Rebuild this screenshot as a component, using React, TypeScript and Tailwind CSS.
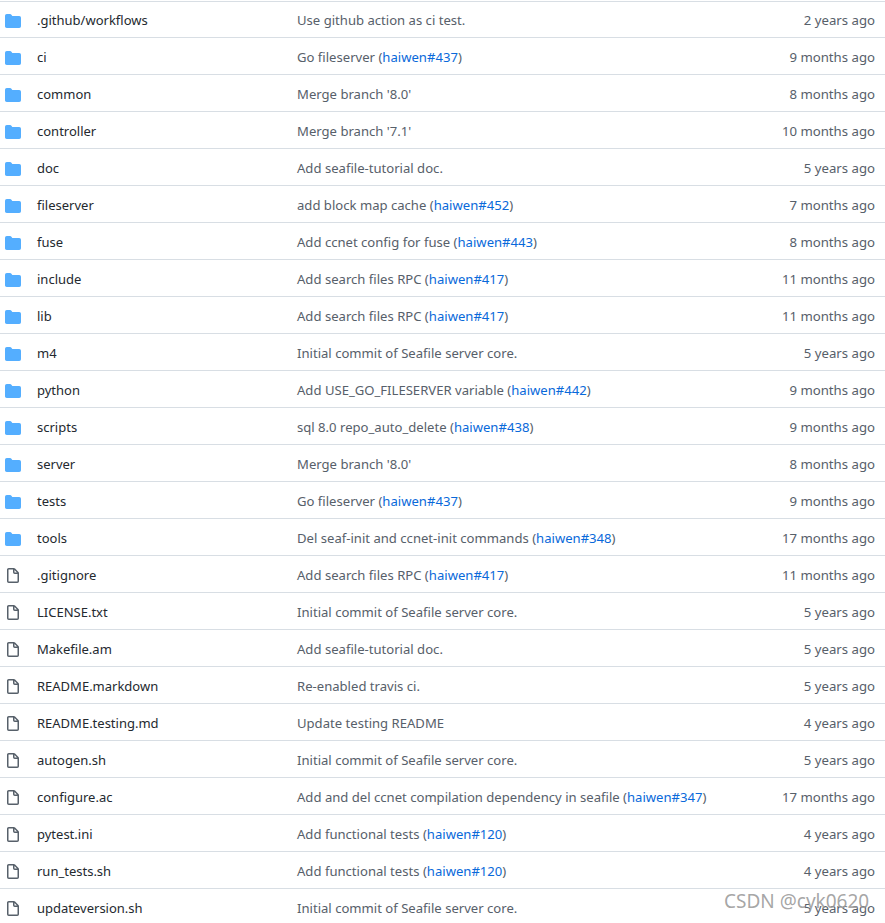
const rows: [string, boolean, string, string | null, string, string][] = [
  [".github/workflows", true, "Use github action as ci test.", null, "", "2 years ago"],
  ["ci", true, "Go fileserver (", "haiwen#437", ")", "9 months ago"],
  ["common", true, "Merge branch '8.0'", null, "", "8 months ago"],
  ["controller", true, "Merge branch '7.1'", null, "", "10 months ago"],
  ["doc", true, "Add seafile-tutorial doc.", null, "", "5 years ago"],
  ["fileserver", true, "add block map cache (", "haiwen#452", ")", "7 months ago"],
  ["fuse", true, "Add ccnet config for fuse (", "haiwen#443", ")", "8 months ago"],
  ["include", true, "Add search files RPC (", "haiwen#417", ")", "11 months ago"],
  ["lib", true, "Add search files RPC (", "haiwen#417", ")", "11 months ago"],
  ["m4", true, "Initial commit of Seafile server core.", null, "", "5 years ago"],
  ["python", true, "Add USE_GO_FILESERVER variable (", "haiwen#442", ")", "9 months ago"],
  ["scripts", true, "sql 8.0 repo_auto_delete (", "haiwen#438", ")", "9 months ago"],
  ["server", true, "Merge branch '8.0'", null, "", "8 months ago"],
  ["tests", true, "Go fileserver (", "haiwen#437", ")", "9 months ago"],
  ["tools", true, "Del seaf-init and ccnet-init commands (", "haiwen#348", ")", "17 months ago"],
  [".gitignore", false, "Add search files RPC (", "haiwen#417", ")", "11 months ago"],
  ["LICENSE.txt", false, "Initial commit of Seafile server core.", null, "", "5 years ago"],
  ["Makefile.am", false, "Add seafile-tutorial doc.", null, "", "5 years ago"],
  ["README.markdown", false, "Re-enabled travis ci.", null, "", "5 years ago"],
  ["README.testing.md", false, "Update testing README", null, "", "4 years ago"],
  ["autogen.sh", false, "Initial commit of Seafile server core.", null, "", "5 years ago"],
  ["configure.ac", false, "Add and del ccnet compilation dependency in seafile (", "haiwen#347", ")", "17 months ago"],
  ["pytest.ini", false, "Add functional tests (", "haiwen#120", ")", "4 years ago"],
  ["run_tests.sh", false, "Add functional tests (", "haiwen#120", ")", "4 years ago"],
  ["updateversion.sh", false, "Initial commit of Seafile server core.", null, "", "5 years ago"],
];

const FolderIcon = () => (
  <svg width="16" height="16" viewBox="0 0 16 16" className="shrink-0 text-[#54aeff]" fill="currentColor">
    <path d="M1.75 1A1.75 1.75 0 000 2.75v10.5C0 14.216.784 15 1.75 15h12.5A1.75 1.75 0 0016 13.25v-8.5A1.75 1.75 0 0014.25 3H7.5a.25.25 0 01-.2-.1l-.9-1.2C6.07 1.26 5.55 1 5 1H1.75z" />
  </svg>
);

const FileIcon = () => (
  <svg width="16" height="16" viewBox="0 0 16 16" className="shrink-0 text-[#57606a]" fill="currentColor">
    <path
      fillRule="evenodd"
      d="M3.75 1.5a.25.25 0 00-.25.25v11.5c0 .138.112.25.25.25h8.5a.25.25 0 00.25-.25V6H9.75A1.75 1.75 0 018 4.25V1.5H3.75zm5.75.56v2.19c0 .138.112.25.25.25h2.19L9.5 2.06zM2 1.75C2 .784 2.784 0 3.75 0h5.086c.464 0 .909.184 1.237.513l3.414 3.414c.329.328.513.773.513 1.237v8.086A1.75 1.75 0 0112.25 15h-8.5A1.75 1.75 0 012 13.25V1.75z"
    />
  </svg>
);

export default function App() {
  return (
    <div className="relative h-[923px] w-[885px] overflow-hidden bg-white pt-px font-['Noto_Sans',sans-serif] text-[13px] text-[#24292f]">
      {rows.map(([name, isDir, msg, link, tail, age], i) => (
        <div
          key={name}
          className={
            i === 0
              ? "flex h-[36px] items-center border-t border-[#d8dee4] pl-[5px] pr-[10px] pt-[3px]"
              : "flex h-[37px] items-center border-t border-[#d8dee4] pl-[5px] pr-[10px] pt-[4px]"
          }
        >
          <div className="w-[32px]">{isDir ? <FolderIcon /> : <FileIcon />}</div>
          <div className="w-[260px]">{name}</div>
          <div className="flex-1 text-[13.1px] text-[#57606a]">
            {msg}
            {link && <span className="text-[#0969da]">{link}</span>}
            {tail}
          </div>
          <div className="text-[13.2px] text-[#57606a]">{age}</div>
        </div>
      ))}
      <div className="absolute left-[724px] top-[887px] text-[19px] text-[#9b9b9b]/90">
        CSDN @cyk0620
      </div>
    </div>
  );
}
